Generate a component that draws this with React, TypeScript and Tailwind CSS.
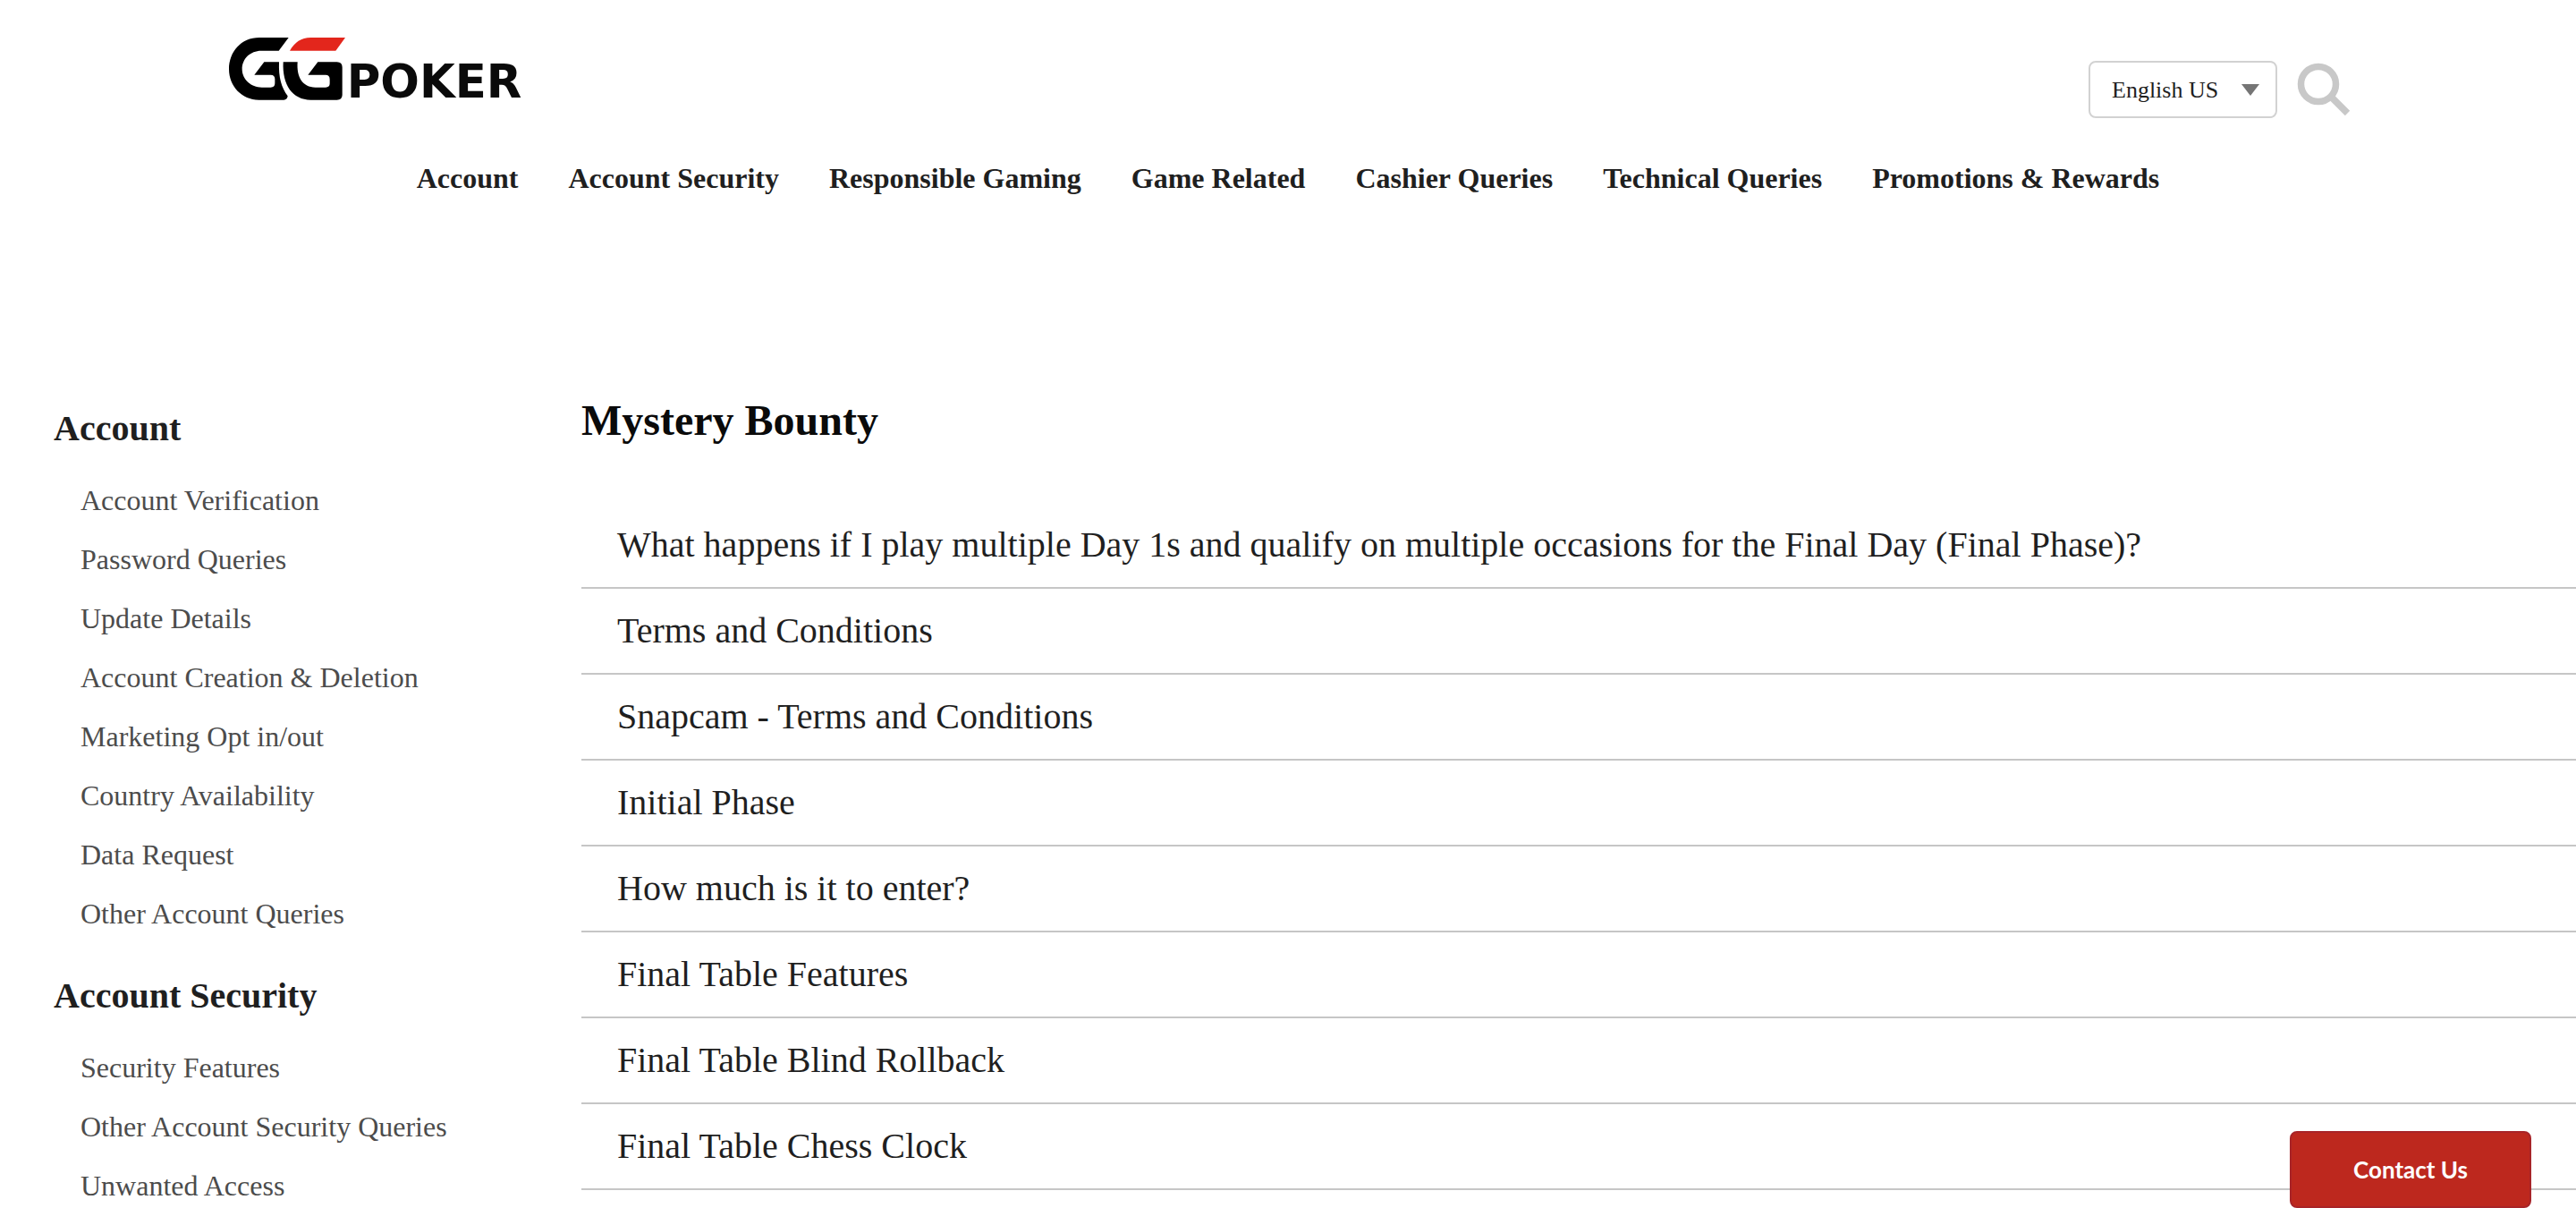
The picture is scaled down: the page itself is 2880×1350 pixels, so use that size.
import React from "react";

const nav = [
  "Account",
  "Account Security",
  "Responsible Gaming",
  "Game Related",
  "Cashier Queries",
  "Technical Queries",
  "Promotions & Rewards",
];

const sections = [
  {
    title: "Account",
    items: [
      "Account Verification",
      "Password Queries",
      "Update Details",
      "Account Creation & Deletion",
      "Marketing Opt in/out",
      "Country Availability",
      "Data Request",
      "Other Account Queries",
    ],
  },
  {
    title: "Account Security",
    items: ["Security Features", "Other Account Security Queries", "Unwanted Access"],
  },
];

const articles = [
  "What happens if I play multiple Day 1s and qualify on multiple occasions for the Final Day (Final Phase)?",
  "Terms and Conditions",
  "Snapcam - Terms and Conditions",
  "Initial Phase",
  "How much is it to enter?",
  "Final Table Features",
  "Final Table Blind Rollback",
  "Final Table Chess Clock",
];

function Logo() {
  return (
    <svg viewBox="0 0 1080 300" className="h-[100px] w-[360px]" role="img" aria-label="GGPoker">
      <path
        d="M248 36H150C88 36 48 84 48 142C48 200 92 245 148 245H232Q243 245 245 232C224 204 214 170 216 118H166L133 161H188Q202 161 202 175V189Q202 203 188 203H158C122 203 92 176 92 142C92 106 120 80 156 80H215Z"
        fill="#000"
      />
      <path d="M438 36H322C290 36 268 52 252 80H406Z" fill="#e3261c" />
      <path
        d="M230 118H278C274 168 294 203 338 203H372Q386 203 386 190V176Q386 161 372 161H313L346 118H410Q428 118 428 136V228Q428 245 410 245H322C262 245 226 196 230 118Z"
        fill="#000"
      />
      <text
        x="443"
        y="237"
        fontSize="154"
        fontWeight="700"
        fill="#0a0a0a"
        className="font-['DejaVu_Sans',sans-serif]"
      >
        POKER
      </text>
    </svg>
  );
}

function Header() {
  return (
    <header className="pt-[30px]">
      <div className="mx-auto flex max-w-[2400px] items-start justify-between pr-3">
        <a href="#home">
          <Logo />
        </a>
        <div className="flex items-center gap-[22px] pt-[38px]">
          <div className="relative">
            <select
              aria-label="Language"
              className="h-16 w-[211px] appearance-none rounded-lg border-2 border-[#d2d2d2] bg-white px-6 text-[26px] text-[#1f1f1f]"
            >
              <option>English US</option>
            </select>
            <svg
              viewBox="0 0 20 13"
              className="pointer-events-none absolute top-[26px] right-5 h-[13px] w-5"
              aria-hidden="true"
            >
              <path d="M0 0H20L10 13Z" fill="#757575" />
            </svg>
          </div>
          <button type="button" aria-label="Search" className="h-[60px] w-[60px]">
            <svg viewBox="0 0 60 60" className="h-full w-full" fill="none" stroke="#c8c8c8">
              <circle cx="24" cy="24" r="19.5" strokeWidth="7.5" />
              <path d="M38 38L56.500 56.500" strokeWidth="7.5" />
            </svg>
          </button>
        </div>
      </div>
      <nav className="mt-12 flex h-[38px] items-center justify-center gap-14 text-[32px] font-bold text-[#1f1f1f]">
        {nav.map((n) => (
          <a key={n} href="#nav">
            {n}
          </a>
        ))}
      </nav>
    </header>
  );
}

export default function App() {
  return (
    <div className="h-screen overflow-hidden bg-white font-['Liberation_Serif',serif]">
      <Header />
      <div className="flex gap-10 pt-56 pl-[60px]">
        <aside className="w-[550px] shrink-0 pt-3.5">
          {sections.map((s) => (
            <section key={s.title} className="mb-9">
              <h2 className="mb-6 text-[40px] leading-[46px] font-bold text-[#1f1f1f]">
                {s.title}
              </h2>
              <ul className="pl-[30px] text-[32px] leading-[66px] text-[#4c4c4c]">
                {s.items.map((i) => (
                  <li key={i}>
                    <a href="#section">{i}</a>
                  </li>
                ))}
              </ul>
            </section>
          ))}
        </aside>
        <main className="min-w-0 flex-1">
          <h1 className="text-[48px] leading-[56px] font-bold text-[#0a0a0a]">Mystery Bounty</h1>
          <ul className="mt-16 text-[40px] leading-[94px] text-[#1f1f1f]">
            {articles.map((a) => (
              <li key={a} className="border-b-2 border-[#c6c6c6] pl-10">
                <a href="#article">{a}</a>
              </li>
            ))}
          </ul>
        </main>
      </div>
      <button
        type="button"
        className="fixed right-[50px] bottom-0 h-[86px] w-[270px] rounded-lg border-2 border-[#a82428] bg-[#bd281e] font-['Lato',sans-serif] text-[26px] font-bold text-white"
      >
        Contact Us
      </button>
    </div>
  );
}
